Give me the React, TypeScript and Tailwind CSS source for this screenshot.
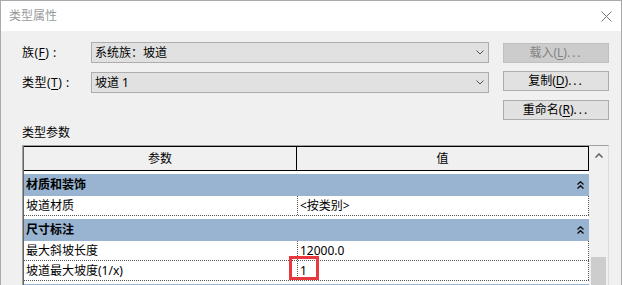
import React from "react";

const font = { fontFamily: '"Noto Sans", "Noto Sans CJK SC", sans-serif' };

function Key({ k }: { k: string }) {
  return <span className="underline underline-offset-2">{k}</span>;
}

function Dots() {
  return <span className="tracking-[2px]">...</span>;
}

function Chevron() {
  return (
    <svg width="8" height="5" viewBox="0 0 8 5" className="shrink-0">
      <path d="M0.5 0.5 L4 4 L7.5 0.5" fill="none" stroke="#555" strokeWidth="1" />
    </svg>
  );
}

function DoubleUp() {
  return (
    <svg width="7" height="8" viewBox="0 0 7 8" className="shrink-0">
      <path d="M0.5 3.5 L3.5 0.8 L6.5 3.5 M0.5 7.5 L3.5 4.8 L6.5 7.5" fill="none" stroke="#111" strokeWidth="1.4" />
    </svg>
  );
}

function Combo({ text }: { text: string }) {
  return (
    <div className="w-[398px] h-[21px] bg-[#e1e1e1] border border-[#adadad] flex items-center justify-between pl-[3px] pr-[4px]">
      <span>{text}</span>
      <Chevron />
    </div>
  );
}

function Btn({ children, disabled }: { children: React.ReactNode; disabled?: boolean }) {
  return (
    <div
      className={
        disabled
          ? "w-[106px] h-[20px] bg-[#cccccc] border border-[#bfbfbf] text-[#838383] flex items-center justify-center"
          : "w-[106px] h-[20px] bg-[#e1e1e1] border border-[#adadad] text-black flex items-center justify-center"
      }
    >
      {children}
    </div>
  );
}

function Group({ label }: { label: string }) {
  return (
    <div className="mt-[3px] h-[22px] bg-[#99b4d1] flex items-center justify-between pl-[2px] pr-[5px]">
      <span className="font-bold">{label}</span>
      <DoubleUp />
    </div>
  );
}

function Row({ name, value, mark }: { name: string; value: string; mark?: boolean }) {
  return (
    <div className="h-[20px] flex border-b border-dotted border-[#555555]">
      <div className="w-[274px] pl-[2px] flex items-center border-r border-dotted border-[#555555]">{name}</div>
      <div className="flex-1 relative pl-[2px] flex items-center border-r border-dotted border-[#555555]">
        {value}
        {mark && <div className="absolute left-[-9px] top-[-5px] w-[30px] h-[24px] border-[3px] border-[#e8383d]" />}
      </div>
    </div>
  );
}

export default function App() {
  return (
    <div className="w-[622px] h-[285px] overflow-hidden bg-[#f0f0f0] border-x border-t border-[#aaaaaa] flex flex-col text-[12px] leading-[14px] text-black" style={font}>
      <div className="h-[30px] shrink-0 bg-white flex items-center justify-between pl-[8px] pr-[9px]">
        <span className="text-[#9a9a9a]">类型属性</span>
        <svg width="11" height="11" viewBox="0 0 11 11">
          <path d="M0.5 0.5 L10.5 10.5 M10.5 0.5 L0.5 10.5" stroke="#777" strokeWidth="1" />
        </svg>
      </div>

      <div className="flex pl-[21px] items-start">
        <div className="flex flex-col gap-[9px] pt-[11px]">
          <div className="flex items-center">
            <span className="w-[69px] tracking-[0.5px]">族(<Key k="F" />)&nbsp;:</span>
            <Combo text="系统族：坡道" />
          </div>
          <div className="flex items-center">
            <span className="w-[69px] tracking-[0.5px]">类型(<Key k="T" />)&nbsp;:</span>
            <Combo text="坡道 1" />
          </div>
        </div>
        <div className="ml-[14px] mt-[12px] flex flex-col gap-[8px]">
          <Btn disabled>载入(<Key k="L" />)<Dots /></Btn>
          <Btn>复制(<Key k="D" />)<Dots /></Btn>
          <div className="mt-[1px]">
            <Btn>重命名(<Key k="R" />)<Dots /></Btn>
          </div>
        </div>
      </div>

      <div className="pl-[21px] mt-[7px] h-[12px] leading-[12px]">类型参数</div>

      <div className="ml-[21px] mt-[6px] w-[587px] flex-1 flex border-t border-l border-r border-t-[#a0a0a0] border-l-[#a0a0a0] border-r-[#dcdcdc]">
        <div className="w-[566px] flex flex-col border-l border-[#646464] bg-white">
          <div className="h-[25px] flex border-t border-r border-b border-black bg-[#f0f0f0]">
            <div className="w-[273px] flex items-center justify-center border-r border-black">参数</div>
            <div className="flex-1 flex items-center justify-center">值</div>
          </div>
          <Group label="材质和装饰" />
          <Row name="坡道材质" value="<按类别>" />
          <Group label="尺寸标注" />
          <Row name="最大斜坡长度" value="12000.0" />
          <Row name="坡道最大坡度(1/x)" value="1" mark />
          <div className="mt-[3px] h-[22px] bg-[#99b4d1]" />
        </div>
        <div className="w-[19px] flex flex-col items-center bg-[#f0f0f0]">
          <div className="h-[19px] flex items-center justify-center">
            <svg width="8" height="5" viewBox="0 0 8 5">
              <path d="M0.5 4.5 L4 1 L7.5 4.5" fill="none" stroke="#606060" strokeWidth="1.5" />
            </svg>
          </div>
          <div className="mt-[92px] w-[15px] h-[40px] bg-[#cdcdcd]" />
        </div>
      </div>
    </div>
  );
}
